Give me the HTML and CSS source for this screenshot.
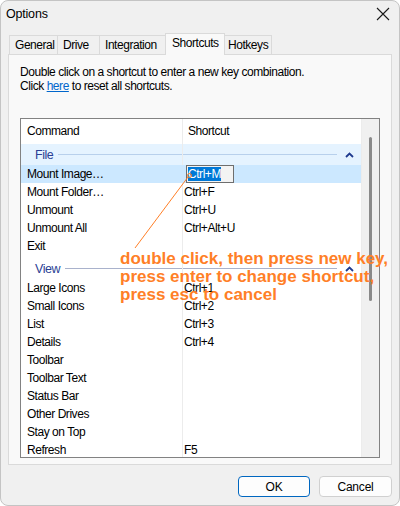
FILE: index.html
```html
<!DOCTYPE html>
<html>
<head>
<meta charset="utf-8">
<link rel="stylesheet" href="styles.css">
</head>
<body>
<div class="window">
  <div class="titlebar">
    <span class="title">Options</span>
    <svg class="close" width="14" height="14" viewBox="0 0 14 14"><path d="M1 1 L13 13 M13 1 L1 13" stroke="#1a1a1a" stroke-width="1.1" fill="none"/></svg>
  </div>
  <div class="tabs">
    <div class="tab">General</div>
    <div class="tab">Drive</div>
    <div class="tab">Integration</div>
    <div class="tab selected">Shortcuts</div>
    <div class="tab">Hotkeys</div>
  </div>
  <div class="panel">
    <p class="intro">Double click on a shortcut to enter a new key combination.<br>Click <a class="link">here</a> to reset all shortcuts.</p>
    <div class="list">
      <div class="list-body">
        <div class="row header"><span class="c1">Command</span><span class="c2 h2">Shortcut</span></div>
        <div class="group"><div class="group-inner active"><span class="gname">File</span><span class="gline"></span><svg class="chev" width="9" height="6" viewBox="0 0 9 6"><path d="M1 5 L4.5 1.5 L8 5" stroke="#1f3a8f" stroke-width="1.8" fill="none"/></svg></div></div>
        <div class="row sel"><span class="c1">Mount Image…</span><span class="c2"><span class="edit"><span class="edit-sel">Ctrl+M</span></span></span></div>
        <div class="row"><span class="c1">Mount Folder…</span><span class="c2">Ctrl+F</span></div>
        <div class="row"><span class="c1">Unmount</span><span class="c2">Ctrl+U</span></div>
        <div class="row"><span class="c1">Unmount All</span><span class="c2">Ctrl+Alt+U</span></div>
        <div class="row"><span class="c1">Exit</span><span class="c2"></span></div>
        <div class="group"><div class="group-inner"><span class="gname">View</span><span class="gline"></span><svg class="chev" width="9" height="6" viewBox="0 0 9 6"><path d="M1 5 L4.5 1.5 L8 5" stroke="#1f3a8f" stroke-width="1.8" fill="none"/></svg></div></div>
        <div class="row"><span class="c1">Large Icons</span><span class="c2">Ctrl+1</span></div>
        <div class="row"><span class="c1">Small Icons</span><span class="c2">Ctrl+2</span></div>
        <div class="row"><span class="c1">List</span><span class="c2">Ctrl+3</span></div>
        <div class="row"><span class="c1">Details</span><span class="c2">Ctrl+4</span></div>
        <div class="row"><span class="c1">Toolbar</span><span class="c2"></span></div>
        <div class="row"><span class="c1">Toolbar Text</span><span class="c2"></span></div>
        <div class="row"><span class="c1">Status Bar</span><span class="c2"></span></div>
        <div class="row"><span class="c1">Other Drives</span><span class="c2"></span></div>
        <div class="row"><span class="c1">Stay on Top</span><span class="c2"></span></div>
        <div class="row"><span class="c1">Refresh</span><span class="c2">F5</span></div>
      </div>
      <div class="scrollbar"><div class="thumb"></div></div>
    </div>
  </div>
  <div class="buttons">
    <button class="btn default">OK</button>
    <button class="btn">Cancel</button>
  </div>
  <svg class="pointer" width="400" height="506" viewBox="0 0 400 506"><path d="M135 248 L188 177" stroke="#ff7f27" stroke-width="1" fill="none"/><circle cx="189.5" cy="175.5" r="2" stroke="#ff7f27" stroke-width="1" fill="none"/></svg>
  <div class="note">double click, then press new key,<br>press enter to change shortcut,<br>press esc to cancel</div>
</div>
</body>
</html>
```
FILE: styles.css
```css
html, body {
  margin: 0;
  padding: 0;
  background: #ffffff;
}
body {
  width: 400px;
  height: 506px;
  overflow: hidden;
  font-family: "Liberation Sans", Arial, sans-serif;
  font-size: 12px;
  letter-spacing: -0.45px;
  color: #000;
}
.window {
  position: relative;
  width: 400px;
  height: 506px;
  box-sizing: border-box;
  border: 1px solid #c4c4c4;
  border-radius: 8px;
  background: #f0f0f0;
  display: flex;
  flex-direction: column;
  overflow: hidden;
}
.titlebar {
  height: 32px;
  flex: none;
  display: flex;
  align-items: flex-start;
  justify-content: space-between;
  padding: 6px 9px 0 5px;
  box-sizing: border-box;
}
.title {
  font-size: 12.5px;
  line-height: 15px;
  letter-spacing: -0.2px;
}
.tabs {
  height: 21px;
  flex: none;
  display: flex;
  align-items: flex-end;
  margin-left: 8px;
  position: relative;
  z-index: 1;
}
.tab {
  height: 19px;
  box-sizing: border-box;
  border: 1px solid #dadada;
  border-bottom: none;
  border-right: none;
  background: #f0f0f0;
  padding: 0 0 0 5px;
  line-height: 19px;
  white-space: nowrap;
}
.tab:nth-child(1) { width: 48px; }
.tab:nth-child(2) { width: 42px; }
.tab:nth-child(3) { width: 66px; }
.tab:nth-child(5) { width: 47px; padding-left: 3px; border-right: 1px solid #dadada; }
.tab.selected {
  height: 22px;
  width: 60px;
  margin-bottom: -1px;
  padding-left: 6px;
  background: #f9f9f9;
  line-height: 19px;
  border-right: 1px solid #dadada;
}
.tab.selected + .tab { border-left: none; }
.panel {
  flex: none;
  height: 411px;
  margin: 0 7px;
  box-sizing: border-box;
  border: 1px solid #dadada;
  background: #f9f9f9;
  padding: 10px 11px 0 11px;
}
.intro {
  margin: 0;
  line-height: 14px;
}
.link {
  color: #0066cc;
  text-decoration: underline;
}
.list {
  margin-top: 25px;
  width: 360px;
  height: 340px;
  box-sizing: border-box;
  border: 1px solid #828282;
  background: #fff;
  display: flex;
}
.list-body {
  flex: 1;
  position: relative;
  border-right: 1px solid #ececec;
}
.list-body::before {
  content: "";
  position: absolute;
  left: 161px;
  top: 0;
  bottom: 0;
  width: 1px;
  background: #ececec;
}
.row {
  height: 18px;
  display: grid;
  grid-template-columns: 161px 1fr;
  align-items: center;
  line-height: 18px;
  position: relative;
}
.row.header {
  height: 22px;
  box-sizing: border-box;
  padding-top: 3px;
  align-items: start;
}
.c1 { padding-left: 6px; }
.c2 { padding-left: 2px; }
.h2 { padding-left: 6px; }
.row.sel { background: #cce8ff; }
.edit {
  display: flex;
  align-items: center;
  width: 48px;
  height: 18px;
  margin-left: 2px;
  box-sizing: border-box;
  border: 1px solid #6e6e6e;
  background: #f3f3f3;
  padding-left: 1px;
}
.edit-sel {
  background: #0078d7;
  color: #fff;
  line-height: 14px;
}
.group {
  height: 24px;
  padding-top: 3px;
  box-sizing: border-box;
}
.group-inner {
  height: 21px;
  display: flex;
  align-items: center;
  padding: 0 7px 0 14px;
}
.group-inner.active { background: #e5f3ff; }
.gname {
  color: #2a3f94;
  font-size: 12.5px;
}
.gline {
  flex: 1;
  height: 1px;
  background: #a9b2cc;
  margin: 0 8px 0 5px;
}
.active .gline { background: #b8d0ec; }
.chev { flex: none; }
.scrollbar {
  width: 17px;
  flex: none;
  background: #f0f0f0;
  display: flex;
  justify-content: center;
}
.thumb {
  margin-top: 18px;
  width: 3px;
  height: 164px;
  border-radius: 2px;
  background: #8a8a8a;
}
.buttons {
  display: flex;
  justify-content: flex-end;
  gap: 9px;
  margin: 11px 7px 0 0;
}
.btn {
  font-family: "Liberation Sans", Arial, sans-serif;
  font-size: 12px;
  letter-spacing: -0.2px;
  height: 21px;
  width: 72px;
  box-sizing: border-box;
  border: 1px solid #d0d0d0;
  border-radius: 4px;
  background: #fdfdfd;
  color: #000;
  padding: 0;
}
.btn + .btn { width: 73px; }
.btn.default {
  border: 1px solid #0067c0;
}
.pointer {
  position: absolute;
  left: -1px;
  top: -1px;
  pointer-events: none;
}
.note {
  position: absolute;
  left: 119px;
  top: 249px;
  font-family: "Liberation Sans", Arial, sans-serif;
  font-weight: bold;
  font-size: 17px;
  letter-spacing: 0;
  line-height: 18px;
  color: #ff7f27;
  white-space: nowrap;
}
```
